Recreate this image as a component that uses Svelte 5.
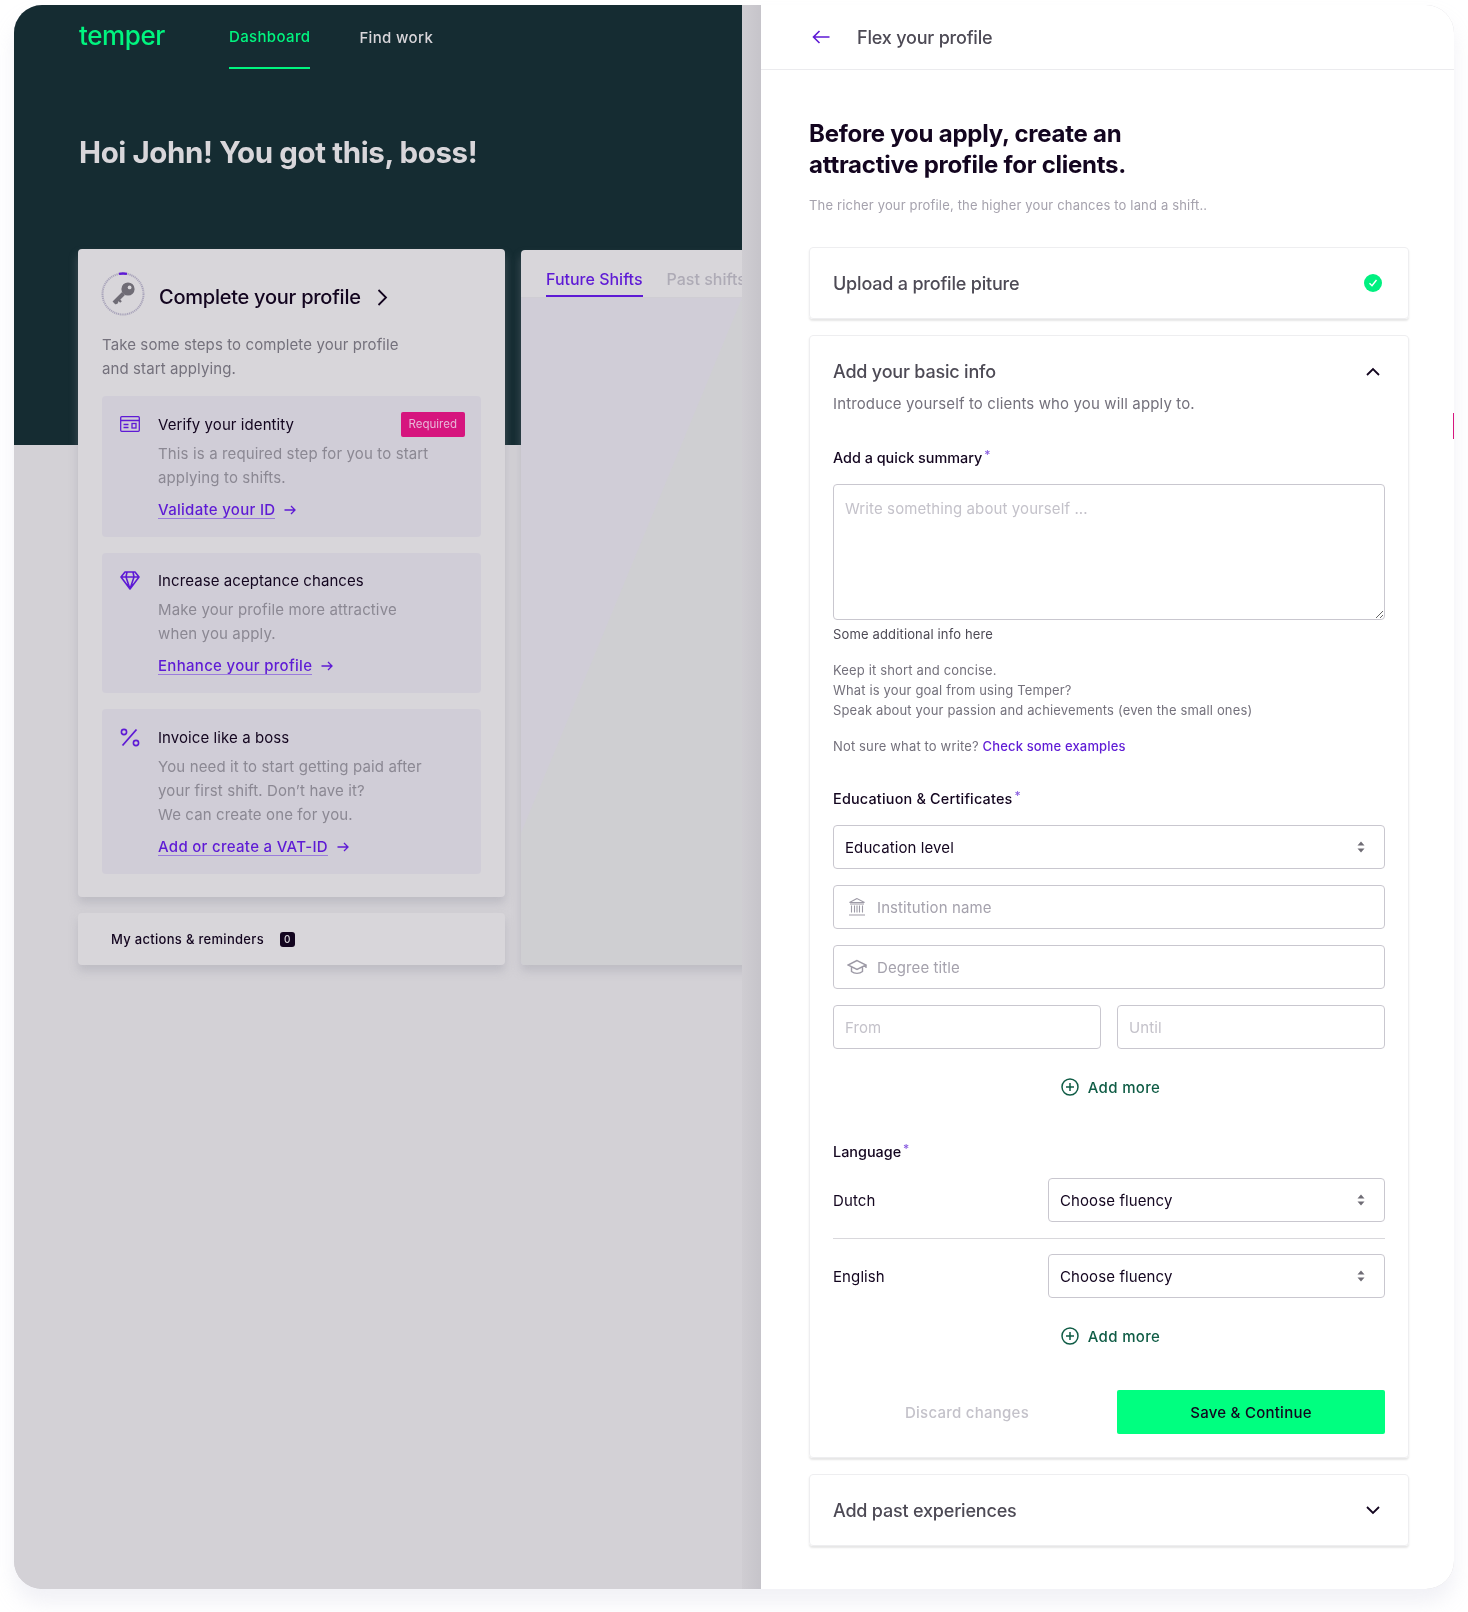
<script>
  const steps = [
    {
      title: "Verify your identity",
      lines: ["This is a required step for you to start", "applying to shifts."],
      link: "Validate your ID",
      icon: "id",
      required: true,
    },
    {
      title: "Increase aceptance chances",
      lines: ["Make your profile more attractive", "when you apply."],
      link: "Enhance your profile",
      icon: "gem",
    },
    {
      title: "Invoice like a boss",
      lines: ["You need it to start getting paid after", "your first shift. Don’t have it?", "We can create one for you."],
      link: "Add or create a VAT-ID",
      icon: "percent",
    },
  ];
  const languages = ["Dutch", "English"];
</script>

{#snippet updown()}
  <svg class="updown" width="8" height="12" viewBox="0 0 8 12"><path d="M4 0.5 7.5 4.5H0.5zM4 11.5 0.5 7.5H7.5z" fill="#6f6c75" /></svg>
{/snippet}

{#snippet addMore()}
  <div class="add-more">
    <svg width="18" height="18" viewBox="0 0 18 18" fill="none" stroke="#0f5c45" stroke-width="1.5"><circle cx="9" cy="9" r="8" /><path d="M9 5v8M5 9h8" /></svg>
    Add more
  </div>
{/snippet}

{#snippet arrow()}
  <svg width="12" height="10" viewBox="0 0 12 10" fill="none" stroke="#5e1ad5" stroke-width="1.3"><path d="M0.5 5h10.5M7 1l4 4-4 4" /></svg>
{/snippet}

<div class="frame">
  <div class="left">
    <div class="hero">
      <nav class="nav">
        <span class="logo">temper</span>
        <span class="nav-item active">Dashboard</span>
        <span class="nav-item">Find work</span>
      </nav>
      <h1>Hoi John! You got this, boss!</h1>
    </div>

    <div class="columns">
      <div class="col-main">
        <section class="card profile">
          <div class="profile-head">
            <svg width="44" height="44" viewBox="0 0 44 44" fill="none">
              <circle cx="22" cy="22" r="20.5" stroke="#a9a4ba" stroke-width="2" stroke-dasharray="1.2 0.7" />
              <path d="M18 1.9a20.5 20.5 0 0 1 8 0" stroke="#5e1ad5" stroke-width="2.4" />
              <path d="M22.5 21.5 13 31" stroke="#6f6c75" stroke-width="4" />
              <path d="M17 27l3 3M14.5 29.5l2 2" stroke="#6f6c75" stroke-width="2.4" />
              <circle cx="27" cy="17" r="6.6" fill="#6f6c75" />
              <circle cx="28.6" cy="15.4" r="1.9" fill="#d8d6da" />
            </svg>
            <h2>Complete your profile</h2>
            <svg class="chev" width="11" height="17" viewBox="0 0 11 17" fill="none" stroke="#13051f" stroke-width="1.8"><path d="M1.5 1 9 8.5 1.5 16" /></svg>
          </div>
          <p class="profile-text">Take some steps to complete your profile<br />and start applying.</p>

          <div class="steps">
            {#each steps as step}
              <div class="step">
                <div class="step-icon">
                  {#if step.icon === "id"}
                    <svg width="20" height="16" viewBox="0 0 20 16" fill="none" stroke="#5e1ad5" stroke-width="1.3"><rect x="0.7" y="0.7" width="18.6" height="14.6" rx="1" /><path d="M1 4.5h18M3.5 8.5h5M3.5 11.5h5" /><rect x="12" y="7.5" width="4" height="4.5" /></svg>
                  {:else if step.icon === "gem"}
                    <svg width="20" height="19" viewBox="0 0 20 19" fill="none" stroke="#5e1ad5" stroke-width="1.6" stroke-linejoin="round"><path d="M5 1h10l4 5-9 12L1 6zM1 6h18M7 1 6 6l4 12 4-12-1-5" /></svg>
                  {:else}
                    <svg width="20" height="19" viewBox="0 0 20 19" fill="none" stroke="#5e1ad5" stroke-width="1.6"><circle cx="4" cy="4" r="2.6" /><circle cx="16" cy="15" r="2.6" /><path d="M16.5 1.5 2.5 17.5" stroke-width="1.8" /></svg>
                  {/if}
                </div>
                <div class="step-body">
                  <div class="step-title">
                    {step.title}
                    {#if step.required}<span class="badge">Required</span>{/if}
                  </div>
                  <p>
                    {#each step.lines as line}
                      <span class="line">{line}</span>
                    {/each}
                  </p>
                  <div class="step-link"><span class="underline">{step.link}</span>{@render arrow()}</div>
                </div>
              </div>
            {/each}
          </div>
        </section>

        <section class="card actions">
          My actions &amp; reminders <span class="count">0</span>
        </section>
      </div>

      <section class="card shifts">
        <div class="tabs">
          <span class="tab current">Future Shifts</span>
          <span class="tab">Past shifts</span>
        </div>
        <div class="shifts-body"></div>
      </section>
    </div>
  </div>

  <div class="scrim"></div>

  <aside class="panel">
    <header class="panel-head">
      <svg width="18" height="14" viewBox="0 0 18 14" fill="none" stroke="#5e1ad5" stroke-width="1.6"><path d="M17.5 7H1.5M7.5 1 1.5 7l6 6" /></svg>
      <span>Flex your profile</span>
    </header>

    <div class="panel-body">
      <h3>Before you apply, create an<br />attractive profile for clients.</h3>
      <p class="lead">The richer your profile, the higher your chances to land a shift..</p>

      <section class="box closed">
        <h4>Upload a profile piture</h4>
        <svg width="18" height="18" viewBox="0 0 18 18"><circle cx="9" cy="9" r="9" fill="#00f080" /><path d="M5.5 9.3 8 11.8 12.5 6" fill="none" stroke="#fff" stroke-width="1.4" /></svg>
      </section>

      <section class="box open">
        <div class="box-head">
          <h4>Add your basic info</h4>
          <svg width="14" height="9" viewBox="0 0 14 9" fill="none" stroke="#13051f" stroke-width="1.8"><path d="M1 8 7 2l6 6" /></svg>
        </div>
        <p class="intro">Introduce yourself to clients who you will apply to.</p>

        <div class="label summary-label">Add a quick summary<sup>*</sup></div>
        <textarea placeholder="Write something about yourself ..."></textarea>
        <p class="hint">Some additional info here</p>
        <p class="tips">Keep it short and concise.<br />What is your goal from using Temper?<br />Speak about your passion and achievements (even the small ones)</p>
        <p class="tips examples">Not sure what to write? <a href="#examples">Check some examples</a></p>

        <div class="label edu-label">Educatiuon &amp; Certificates<sup>*</sup></div>
        <div class="fields">
          <div class="field">
            <select><option>Education level</option></select>
            {@render updown()}
          </div>
          <div class="field with-icon">
            <svg class="field-icon" width="18" height="20" viewBox="0 0 18 20" fill="none" stroke="#9d9aa6" stroke-width="1.1"><path d="M9 1.5 1.5 5.5h15zM2 7h14M3.5 8.5v7M6.5 8.5v7M9 8.5v7M11.5 8.5v7M14.5 8.5v7M1 18h16" /></svg>
            <input placeholder="Institution name" />
          </div>
          <div class="field with-icon">
            <svg class="field-icon degree" width="20" height="16" viewBox="0 0 20 16" fill="none" stroke="#9d9aa6" stroke-width="1.4"><path d="M10 1.5 1 6l9 4.5L19 6zM4.5 8v4.5c3 2.5 8 2.5 11 0V8M19 6v3" /></svg>
            <input placeholder="Degree title" />
          </div>
          <div class="pair">
            <input placeholder="From" />
            <input placeholder="Until" />
          </div>
        </div>
        {@render addMore()}

        <div class="label lang-label">Language<sup>*</sup></div>
        {#each languages as lang, i}
          <div class="lang-row" class:ruled={i > 0}>
            <span>{lang}</span>
            <div class="field">
              <select><option>Choose fluency</option></select>
              {@render updown()}
            </div>
          </div>
        {/each}
        {@render addMore()}

        <div class="pair form-actions">
          <button class="discard">Discard changes</button>
          <button class="save">Save &amp; Continue</button>
        </div>
      </section>

      <section class="box closed last">
        <h4>Add past experiences</h4>
        <svg width="14" height="9" viewBox="0 0 14 9" fill="none" stroke="#13051f" stroke-width="1.8"><path d="M1 1l6 6 6-6" /></svg>
      </section>
    </div>
    <span class="sliver"></span>
  </aside>
</div>

<style>
  :global(body) {
    background: #fff;
    font-family: Inter, "Liberation Sans", sans-serif;
  }

  :global(#app) {
    filter: drop-shadow(0 14px 10px rgba(190, 190, 215, 0.22));
  }

  .frame {
    position: relative;
    display: flex;
    width: 1440px;
    height: 1584px;
    margin: 5px 14px 23px;
    border-radius: 28px;
    overflow: hidden;
    background: #d3d1d6;
  }

  .left {
    flex: none;
    width: 728px;
    overflow: hidden;
    background: #d3d1d6;
  }

  .hero {
    height: 440px;
    padding-left: 65px;
    background: #152c32;
    box-sizing: border-box;
  }

  .nav {
    display: flex;
    align-items: center;
    height: 64px;
  }

  .logo {
    width: 150px;
    margin-top: -4px;
    color: #00f57f;
    font-size: 26px;
    font-weight: 500;
    letter-spacing: -0.4px;
  }

  .nav-item {
    display: flex;
    align-items: center;
    height: 64px;
    margin-right: 49px;
    color: #d8d6da;
    font-size: 15px;
    font-weight: 500;
    letter-spacing: 0.35px;
    box-sizing: border-box;
  }

  .nav-item.active {
    color: #00f57f;
    border-bottom: 2px solid #00f57f;
  }

  h1 {
    margin: 63px 0 0;
    color: #d8d6da;
    font-size: 29.5px;
    line-height: 40px;
    font-weight: 700;
    letter-spacing: -0.4px;
  }

  .columns {
    display: flex;
    gap: 16px;
    margin-top: -196px;
    padding-left: 64px;
  }

  .col-main {
    flex: none;
    width: 427px;
    display: flex;
    flex-direction: column;
    gap: 16px;
  }

  .card {
    border-radius: 4px;
    background: #d8d6da;
    box-shadow: 0 6px 10px rgba(150, 148, 160, 0.35);
  }

  .profile {
    height: 648px;
    padding: 24px;
    box-sizing: border-box;
  }

  .profile-head {
    display: flex;
    align-items: center;
    height: 42px;
    margin-left: -1px;
  }

  .profile-head h2 {
    margin: 6px 0 0 14px;
    color: #13051f;
    font-size: 20px;
    font-weight: 500;
    letter-spacing: -0.25px;
  }

  .chev {
    margin: 6px 0 0 16px;
  }

  .profile-text {
    margin: 18px 0 15px;
    color: #74717c;
    font-size: 15px;
    line-height: 24px;
    letter-spacing: 0.1px;
  }

  .steps {
    display: flex;
    flex-direction: column;
    gap: 16px;
  }

  .step {
    display: flex;
    padding: 16px 16px 15px 18px;
    border-radius: 4px;
    background: #d0cdd7;
  }

  .step-icon {
    flex: none;
    width: 38px;
    height: 24px;
    display: flex;
    align-items: center;
  }

  .step-body {
    flex: 1;
  }

  .step-title {
    display: flex;
    justify-content: space-between;
    align-items: center;
    height: 24px;
    color: #13051f;
    font-size: 15px;
    letter-spacing: 0.08px;
  }

  .badge {
    padding: 0 8px;
    border-radius: 2px;
    background: #d6157e;
    color: #e8b6d8;
    font-size: 11.5px;
    line-height: 25px;
    letter-spacing: 0;
  }

  .step p {
    margin: 5.5px 0 8px;
    color: #8b8893;
    font-size: 15px;
    line-height: 24px;
    letter-spacing: 0.13px;
  }

  .line {
    display: block;
  }

  .step-link {
    display: flex;
    align-items: center;
    gap: 9px;
    height: 24px;
    color: #5e1ad5;
    font-size: 15px;
    font-weight: 500;
    letter-spacing: 0.3px;
  }

  .underline {
    border-bottom: 1.5px solid #9a7bdc;
    line-height: 17px;
  }

  .actions {
    display: flex;
    align-items: center;
    gap: 16px;
    height: 52px;
    padding-left: 33px;
    color: #13051f;
    font-size: 13px;
    font-weight: 500;
    letter-spacing: 0.3px;
  }

  .count {
    width: 15px;
    height: 15px;
    border-radius: 3px;
    background: #13051f;
    color: #d8d6da;
    font-size: 10px;
    line-height: 15px;
    text-align: center;
  }

  .shifts {
    flex: none;
    width: 400px;
    height: 715px;
    margin-top: 1px;
    overflow: hidden;
    display: flex;
    flex-direction: column;
  }

  .tabs {
    flex: none;
    display: flex;
    gap: 24px;
    height: 48px;
    padding-left: 25px;
    border-bottom: 1px solid #cfcdd3;
    box-sizing: border-box;
  }

  .tab {
    height: 47px;
    padding-top: 19px;
    color: #aeabb6;
    font-size: 16px;
    font-weight: 500;
    line-height: 20px;
    box-sizing: border-box;
  }

  .tab.current {
    color: #5e1ad5;
    border-bottom: 2px solid #5e1ad5;
  }

  .shifts-body {
    position: relative;
    flex: 1;
    background: #d0cdd7;
  }

  .shifts-body::after {
    content: "";
    position: absolute;
    inset: 0;
    background: #cfcfd2;
    clip-path: polygon(221px 0, 400px 0, 400px 100%, 0 100%, 0 535px);
  }

  .scrim {
    flex: none;
    width: 19px;
    background: linear-gradient(to right, #cfcdd2, #c6c4ca);
  }

  .panel {
    position: relative;
    flex: 1;
    background: #fff;
  }

  .panel-head {
    display: flex;
    align-items: center;
    gap: 27px;
    height: 64px;
    padding-left: 51px;
    border-bottom: 1px solid #ebebee;
    color: #4d4a55;
    font-size: 18px;
    font-weight: 500;
    letter-spacing: -0.2px;
  }

  .panel-body {
    padding: 48px 45px 0 48px;
  }

  h3 {
    margin: 0;
    color: #13051f;
    font-size: 24px;
    line-height: 31px;
    font-weight: 700;
    letter-spacing: -0.25px;
  }

  .lead {
    margin: 15px 0 32px;
    color: #a5a2ad;
    font-size: 13px;
    line-height: 20px;
    letter-spacing: 0.17px;
  }

  .box {
    margin-bottom: 16px;
    border: 1px solid #eeeef0;
    border-radius: 4px;
    box-shadow: 0 2px 2px rgba(0, 0, 0, 0.1);
    box-sizing: border-box;
  }

  .box.closed {
    display: flex;
    align-items: center;
    justify-content: space-between;
    height: 72px;
    padding: 0 26px 0 23px;
  }

  .box.closed.last svg,
  .box-head svg {
    margin-right: 2px;
  }

  .box.open {
    height: 1123px;
    padding: 23px 23px 0;
  }

  .box-head {
    display: flex;
    align-items: center;
    justify-content: space-between;
    height: 24px;
    padding-right: 3px;
  }

  h4 {
    margin: 0;
    color: #4d4a55;
    font-size: 18px;
    font-weight: 500;
    letter-spacing: -0.2px;
  }

  .intro {
    margin: 9px 0 0;
    color: #74717c;
    font-size: 15px;
    line-height: 24px;
    letter-spacing: 0.13px;
  }

  .label {
    color: #13051f;
    font-size: 14.4px;
    font-weight: 500;
    line-height: 20px;
  }

  sup {
    position: relative;
    top: 2px;
    color: #8a5fe0;
    font-size: 12px;
    line-height: 0;
    margin-left: 2px;
  }

  .summary-label {
    margin-top: 32px;
    margin-bottom: 16px;
  }

  textarea {
    display: block;
    width: 100%;
    height: 136px;
    padding: 12px 11px;
    border: 1px solid #c9c7cf;
    border-radius: 4px;
    font: 15px/24px Inter, sans-serif;
    letter-spacing: 0.1px;
    outline: none;
    box-sizing: border-box;
  }

  ::placeholder {
    color: #c4c2ca;
    opacity: 1;
  }

  .hint {
    margin: 4px 0 0;
    color: #4d4a55;
    font-size: 13px;
    line-height: 20px;
    letter-spacing: 0.15px;
  }

  .tips {
    margin: 16px 0 0;
    color: #74717c;
    font-size: 13px;
    line-height: 20px;
    letter-spacing: 0.15px;
  }

  .tips a {
    color: #5e1ad5;
    font-weight: 500;
    text-decoration: none;
  }

  .edu-label {
    margin-top: 33px;
    margin-bottom: 16px;
    letter-spacing: 0.2px;
  }

  .fields {
    display: flex;
    flex-direction: column;
    gap: 16px;
  }

  .field {
    position: relative;
    flex: 1;
  }

  input,
  select {
    display: block;
    width: 100%;
    height: 44px;
    padding: 0 11px;
    border: 1px solid #c9c7cf;
    border-radius: 4px;
    background: #fff;
    color: #13051f;
    font: 15px Inter, sans-serif;
    letter-spacing: 0.1px;
    outline: none;
    appearance: none;
    box-sizing: border-box;
  }

  .with-icon input {
    padding-left: 43px;
  }

  .with-icon input::placeholder {
    color: #a5a2ad;
  }

  .field-icon {
    position: absolute;
    left: 15px;
    top: 12px;
  }

  .field-icon.degree {
    left: 14px;
    top: 14px;
  }

  .updown {
    position: absolute;
    right: 20px;
    top: 16px;
  }

  .pair {
    display: grid;
    grid-template-columns: 1fr 1fr;
    gap: 16px;
  }

  .add-more {
    display: flex;
    align-items: center;
    justify-content: center;
    gap: 9px;
    height: 24px;
    margin-top: 26px;
    padding-left: 3px;
    color: #0f5c45;
    font-size: 15px;
    font-weight: 500;
    letter-spacing: 0.35px;
  }

  .lang-label {
    margin-top: 43px;
    margin-bottom: 16px;
  }

  .lang-row {
    display: flex;
    align-items: center;
    color: #13051f;
    font-size: 15px;
    letter-spacing: 0.1px;
  }

  .lang-row span {
    flex: none;
    width: 215px;
  }

  .lang-row.ruled {
    margin-top: 16px;
    padding-top: 15px;
    border-top: 1px solid #d9d8dc;
  }

  .form-actions {
    margin-top: 42px;
  }

  button {
    height: 44px;
    border: none;
    border-radius: 2px;
    font: 500 15px Inter, sans-serif;
    letter-spacing: 0.25px;
  }

  .discard {
    background: none;
    color: #c4c2ca;
  }

  .save {
    background: #00ff80;
    color: #13051f;
  }

  .sliver {
    position: absolute;
    right: 0;
    top: 408px;
    width: 1px;
    height: 26px;
    background: #d6157e;
  }
</style>
